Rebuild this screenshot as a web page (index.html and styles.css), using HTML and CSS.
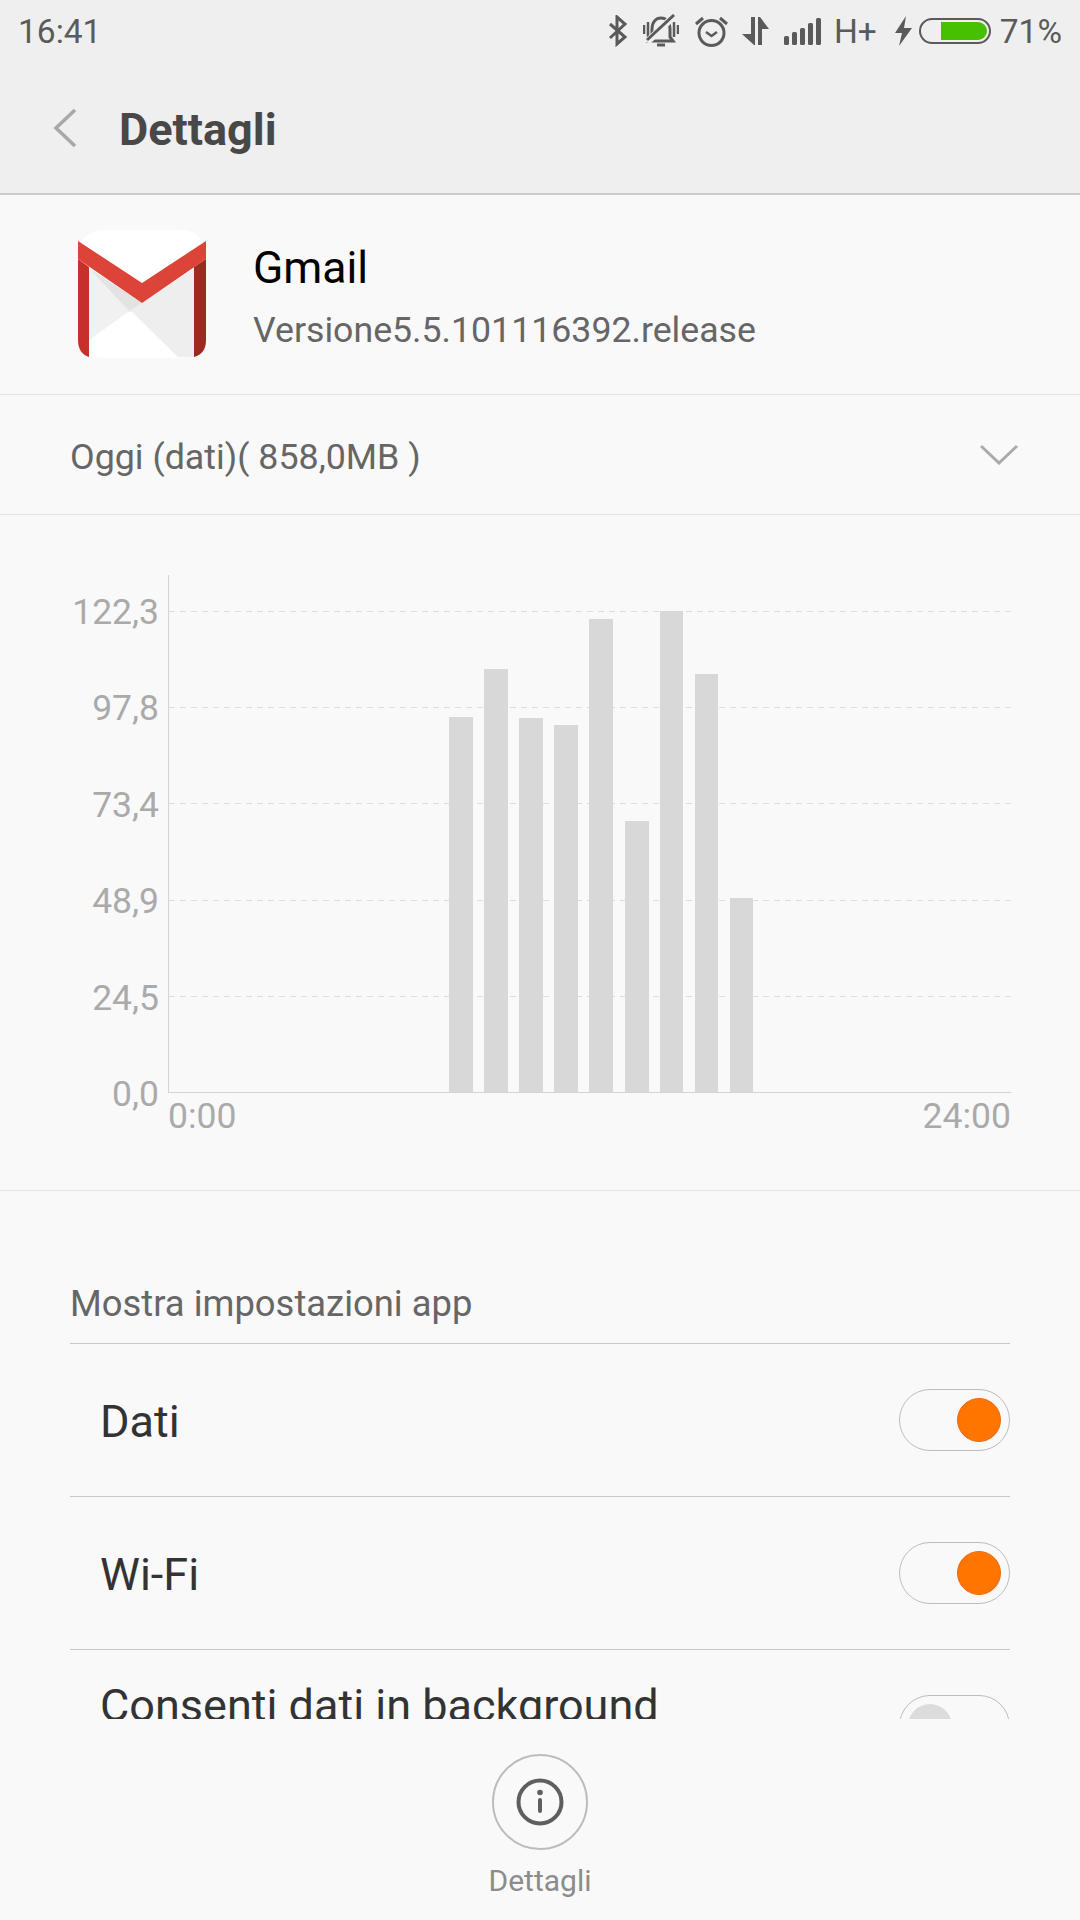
FILE: index.html
```html
<!DOCTYPE html>
<html lang="it">
<head>
  <meta charset="UTF-8">
  <title>Dettagli</title>
  <link rel="stylesheet" href="styles.css">
</head>
<body>

<div class="screen">

  <header class="top">
    <div class="status-bar">
      <span class="clock">16:41</span>
      <div class="status-icons">
        <svg class="ico" width="20" height="32" viewBox="0 0 20 32"><path d="M2 9 L17 22 L9 29 V2 L17 9 L2 23" fill="none" stroke="#5a5a5a" stroke-width="3"/></svg>
        <svg class="ico ico-bell" width="36" height="34" viewBox="0 0 36 34"><g fill="none" stroke="#5a5a5a" stroke-width="3"><path d="M9 23 V15 C9 8 13 4 18 4 C23 4 27 8 27 15 V23 L30 27 H6 Z"/><path d="M14 31 H22"/><path d="M1 11 V20 M5 8 V23 M31 8 V23 M35 11 V20" stroke-width="2.5"/><path d="M4 28 L31 2" stroke="#efefef" stroke-width="7"/><path d="M4 26 L31 1"/></g></svg>
        <svg class="ico ico-alarm" width="33" height="32" viewBox="0 0 33 32"><g fill="none" stroke="#5a5a5a" stroke-width="3"><circle cx="16.500" cy="18" r="12.500"/><path d="M11 17 L16.500 21 L22 17" stroke-width="2.500"/><path d="M1 9 L8 3 M32 9 L25 3"/></g></svg>
        <svg class="ico ico-arrows" width="27" height="28" viewBox="0 0 27 28"><path d="M9 0 H13 V28 H12 L0 17 H9 Z M16 0 H18 L27 12 H20 V28 H16 Z" fill="#5a5a5a"/></svg>
        <svg class="ico ico-signal" width="37" height="27" viewBox="0 0 37 27"><g fill="#5a5a5a"><rect x="0" y="18" width="5" height="9" rx="1.500"/><rect x="8" y="14" width="5" height="13" rx="1.500"/><rect x="16" y="10" width="5" height="17" rx="1.500"/><rect x="24" y="5" width="5" height="22" rx="1.500"/><rect x="32" y="0" width="5" height="27" rx="1.500"/></g></svg>
        <span class="net">H+</span>
        <svg class="ico ico-bolt" width="17" height="30" viewBox="0 0 17 30"><path d="M11 0 L0 17 H7 L4 30 L17 12 H9 Z" fill="#5a5a5a"/></svg>
        <div class="battery"><div class="battery-fill"></div></div>
        <span class="pct">71%</span>
      </div>
    </div>
    <div class="toolbar">
      <svg class="back" width="24" height="40" viewBox="0 0 24 40"><path d="M22 2 L3 20 L22 38" fill="none" stroke="#a8a8a8" stroke-width="3.500"/></svg>
      <h1 class="title">Dettagli</h1>
    </div>
  </header>

  <main class="content">
    <section class="app-row">
      <svg class="app-icon" width="128" height="128" viewBox="0 0 128 128">
        <rect width="128" height="128" rx="24" fill="#fff"/>
        <path d="M11 38 L53 80 L11 110 Z" fill="#f1f1f1"/>
        <path d="M11 38 L64 73 L52 82 Z" fill="#e3e3e3"/>
        <path d="M64 73 L117 38 V127 H100 L52 80 Z" fill="#eeeeee"/>
        <path d="M0 29 L11 37 V127 C4 125 0 119 0 110 Z" fill="#c5302a"/>
        <path d="M128 29 L116 37 V127 C124 125 128 119 128 110 Z" fill="#9e2a1f"/>
        <path d="M0 11 L64 53 L128 11 V29 L64 73 L0 29 Z" fill="#dd4438"/>
      </svg>
      <div class="app-info">
        <div class="app-name">Gmail</div>
        <div class="app-version">Versione5.5.101116392.release</div>
      </div>
    </section>

    <section class="period">
      <span>Oggi (dati)( 858,0MB )</span>
      <svg width="38" height="21" viewBox="0 0 38 21"><path d="M1 2 L19 19 L37 2" fill="none" stroke="#aaa" stroke-width="3"/></svg>
    </section>

    <section class="chart">
      <div class="chart-body">
        <div class="y-axis">
          <span>122,3</span>
          <span>97,8</span>
          <span>73,4</span>
          <span>48,9</span>
          <span>24,5</span>
          <span>0,0</span>
        </div>
        <div class="plot">
          <div class="grid-line"></div>
          <div class="grid-line"></div>
          <div class="grid-line"></div>
          <div class="grid-line"></div>
          <div class="grid-line"></div>
          <div class="bars">
            <div class="bar" style="height:375px"></div>
            <div class="bar" style="height:423px"></div>
            <div class="bar" style="height:374px"></div>
            <div class="bar" style="height:367px"></div>
            <div class="bar" style="height:473px"></div>
            <div class="bar bar-shift" style="height:271px"></div>
            <div class="bar" style="height:481px"></div>
            <div class="bar" style="height:418px"></div>
            <div class="bar" style="height:194px"></div>
          </div>
        </div>
      </div>
      <div class="x-axis">
        <span>0:00</span>
        <span>24:00</span>
      </div>
    </section>

    <section class="settings">
      <div class="settings-head">Mostra impostazioni app</div>
      <div class="setting">
        <span class="setting-name">Dati</span>
        <div class="toggle on"><div class="knob"></div></div>
      </div>
      <div class="setting">
        <span class="setting-name">Wi-Fi</span>
        <div class="toggle on"><div class="knob"></div></div>
      </div>
      <div class="setting">
        <span class="setting-name two-line">Consenti dati in background</span>
        <div class="toggle"><div class="knob"></div></div>
      </div>
    </section>
  </main>

  <footer class="bottom">
    <div class="bottom-btn">
      <svg width="48" height="48" viewBox="0 0 48 48">
        <circle cx="24" cy="24" r="21.500" fill="none" stroke="#5f5f5f" stroke-width="4"/>
        <circle cx="24" cy="14.500" r="2.800" fill="#5f5f5f"/>
        <path d="M24 22 V33" stroke="#5f5f5f" stroke-width="4" stroke-linecap="round"/>
      </svg>
    </div>
    <span class="bottom-label">Dettagli</span>
  </footer>

</div>

</body>
</html>
```

FILE: styles.css
```css
* {
  box-sizing: border-box;
}

html, body {
  margin: 0;
  padding: 0;
}

body {
  font-family: Roboto, sans-serif;
  background: #f9f9f9;
}

.screen {
  width: 1080px;
  height: 1920px;
  display: flex;
  flex-direction: column;
  overflow: hidden;
}

/* Status bar and title */
.top {
  background: #efefef;
  border-bottom: 2px solid #cbcbcb;
  height: 195px;
  flex-shrink: 0;
}

.status-bar {
  height: 62px;
  padding: 0 18px 0 18px;
  display: flex;
  align-items: center;
  justify-content: space-between;
  color: #5a5a5a;
  font-size: 33.500px;
}

.status-icons {
  display: flex;
  align-items: center;
}

.ico {
  display: block;
  margin-right: 15.500px;
}

.ico-bell {
  margin-right: 15.500px;
}

.ico-alarm {
  margin-right: 14.500px;
}

.ico-arrows {
  margin-right: 14.500px;
}

.ico-signal {
  margin-right: 13px;
}

.net {
  margin-right: 18px;
}

.ico-bolt {
  margin-right: 7px;
}

.battery {
  width: 72px;
  height: 26px;
  border: 2.5px solid #5a5a5a;
  border-radius: 13px;
  padding: 2px;
  padding-left: 20px;
  margin-right: 9px;
}

.battery-fill {
  height: 100%;
  background: #46c000;
  border-radius: 0 9px 9px 0;
}

.toolbar {
  height: 132px;
  padding: 0 0 0 53px;
  display: flex;
  align-items: center;
}

.title {
  margin: 3px 0 0 42px;
  font-size: 45px;
  font-weight: 700;
  color: #484848;
}

/* Scrolling part, cut off by the bottom bar */
.content {
  flex: 1;
  min-height: 0;
  overflow: hidden;
}

.app-row {
  height: 200px;
  border-bottom: 1px solid #e4e4e4;
  padding: 0 0 1px 78px;
  display: flex;
  align-items: center;
}

.app-icon {
  margin-right: 47px;
}

.app-info {
  padding-top: 6.500px;
}

.app-name {
  font-size: 44.500px;
  color: #000;
  line-height: 56px;
}

.app-version {
  font-size: 35.700px;
  color: #666;
  line-height: 50px;
  margin-top: 9px;
}

.period {
  height: 120px;
  border-bottom: 1px solid #e4e4e4;
  padding: 4px 62px 0 70px;
  display: flex;
  align-items: center;
  justify-content: space-between;
  font-size: 35.800px;
  color: #666;
}

.period svg {
  margin-top: -4px;
}

.chart {
  height: 676px;
  border-bottom: 1px solid #e4e4e4;
  padding-top: 60px;
}

.chart-body {
  display: flex;
  height: 518px;
}

.y-axis {
  width: 168px;
  padding: 17px 9px 0 0;
  margin-bottom: -21px;
  display: flex;
  flex-direction: column;
  justify-content: space-between;
  align-items: flex-end;
  font-size: 35.500px;
  line-height: 40px;
  color: #aaa;
}

.plot {
  position: relative;
  width: 843px;
  padding-top: 36px;
  border-left: 1px solid #d4d4d4;
  border-bottom: 1px solid #d4d4d4;
}

.grid-line {
  height: 96.200px;
  background: repeating-linear-gradient(90deg, #dcdcdc 0 6px, transparent 6px 11px) top / 100% 1px no-repeat;
}

.bars {
  position: absolute;
  left: 280px;
  bottom: 0;
  display: flex;
  align-items: flex-end;
  gap: 11.600px;
}

.bar {
  width: 23.500px;
  background: #d8d8d8;
}

.bar-shift {
  transform: translateX(1px);
}

.x-axis {
  margin: 3px 69px 0 168px;
  display: flex;
  justify-content: space-between;
  font-size: 35.500px;
  line-height: 40px;
  color: #aaa;
}

.settings {
  padding: 0 70px;
}

.settings-head {
  height: 153px;
  padding-bottom: 19px;
  border-bottom: 1px solid #c8c8c8;
  display: flex;
  align-items: flex-end;
  font-size: 36.400px;
  line-height: 40px;
  color: #666;
}

.setting {
  height: 153px;
  border-bottom: 1px solid #c8c8c8;
  padding: 0 0 0 31px;
  display: flex;
  align-items: center;
  justify-content: space-between;
}

.setting-name {
  font-size: 45px;
  color: #333;
  margin-left: -1px;
  margin-top: 3px;
}

.two-line {
  margin-top: 0;
  margin-bottom: 41px;
}

.toggle {
  width: 111px;
  height: 62px;
  border: 1.500px solid #bdbdbd;
  border-radius: 31px;
  padding: 0 8px;
  display: flex;
  align-items: center;
}

.toggle.on {
  justify-content: flex-end;
}

.knob {
  width: 44px;
  height: 44px;
  border-radius: 50%;
  background: #dcdcdc;
}

.toggle.on .knob {
  background: #ff7500;
  border: 1px solid #ee6a10;
}

/* Bottom action */
.bottom {
  height: 201px;
  flex-shrink: 0;
  background: #f9f9f9;
  display: flex;
  flex-direction: column;
  align-items: center;
  padding-top: 35px;
}

.bottom-btn {
  width: 96px;
  height: 96px;
  border: 2px solid #bcbcbc;
  border-radius: 50%;
  display: flex;
  align-items: center;
  justify-content: center;
}

.bottom-label {
  margin-top: 13px;
  font-size: 30px;
  line-height: 36px;
  color: #8c8c8c;
}
```
